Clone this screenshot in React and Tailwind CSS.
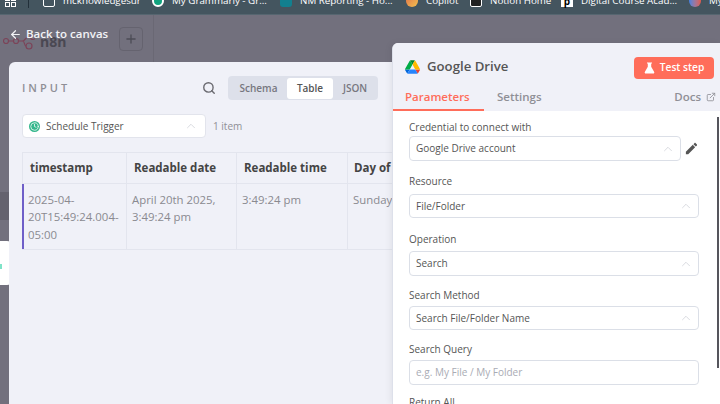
import { ChevronUp, Search, Plus, ArrowLeft, ExternalLink, Clock } from 'lucide-react';

const font = { fontFamily: '"Open Sans", sans-serif' };

function Bookmark({ icon, glyph, label, className }) {
  return (
    <div className={`flex shrink-0 items-center gap-[8px] ${className}`}>
      <span className={`flex h-[12px] w-[12px] shrink-0 items-center justify-center text-[10px] font-bold leading-none text-black ${icon}`}>{glyph}</span>
      <span className="whitespace-nowrap text-[9.8px] leading-[14px] text-white">{label}</span>
    </div>
  );
}

function SelectBox({ value, className = '' }) {
  return (
    <div className={`flex items-center justify-between rounded-[4px] border border-[#dbdfe7] bg-white pl-[6px] pr-[5px] text-[10px] text-[#555] ${className}`}>
      <span>{value}</span>
      <ChevronUp size={14} strokeWidth={1.1} className="shrink-0 text-[#c4c7cf]" />
    </div>
  );
}

function Label({ className, children }) {
  return <div className={`h-[14px] text-[10px] leading-[14px] text-[#555] ${className}`}>{children}</div>;
}

function HeadCell({ className, children }) {
  return <div className={`flex shrink-0 items-center border-r border-[#e3e5ee] text-[11.5px] font-bold text-[#444] ${className}`}>{children}</div>;
}

function BodyCell({ className, children }) {
  return <div className={`shrink-0 border-r border-[#e3e5ee] pt-[7px] text-[11.4px] leading-[17.4px] text-[#8a8a90] ${className}`}>{children}</div>;
}

export default function App() {
  return (
    <div style={font} className="relative flex h-[404px] w-[720px] flex-col overflow-hidden bg-[#72707d]">
      <div className="h-[15px] shrink-0 overflow-hidden border-b border-[#566670] bg-[#44555f]">
        <div className="-mt-[6px] flex h-[14px] items-center pl-[5px]">
          <span className="mr-[12px] grid h-[12px] w-[11px] shrink-0 grid-cols-2 gap-[1px]">
            <i className="border border-white" /><i className="border border-white" />
            <i className="border border-white" /><i className="border border-white" />
          </span>
          <span className="mr-[14px] h-[14px] w-px shrink-0 bg-[#22303a]" />
          <Bookmark icon="rounded-[2px] border border-white" label="mcknowledgesur" className="w-[109px]" />
          <Bookmark icon="rounded-full border-2 border-white bg-[#12a37f]" label="My Grammarly - Gr..." className="w-[128px]" />
          <Bookmark icon="rounded-[3px] bg-[#12808f]" label="NM Reporting - Ho..." className="w-[126px]" />
          <Bookmark icon="rounded-full bg-linear-to-br from-[#e0704a] to-[#f2c14e]" label="Copilot" className="w-[64px]" />
          <Bookmark icon="rounded-[2px] border border-white bg-[#222]" label="Notion Home" className="w-[91px]" />
          <Bookmark icon="bg-white" glyph="p" label="Digital Course Acad..." className="w-[128px]" />
          <Bookmark icon="rounded-full bg-linear-to-r from-[#3f7fe0] to-[#e0574a]" label="My" className="w-[40px]" />
        </div>
      </div>

      <div className="relative flex-1">
        <div className="flex h-[47px] items-center pl-[119px]">
          <span className="flex h-[24px] w-[24px] items-center justify-center rounded-[4px] border border-[#65636f] text-[#4c4b55]">
            <Plus size={14} strokeWidth={2.2} />
          </span>
        </div>
        <span className="absolute left-[153px] top-0 h-[47px] w-px bg-[#6a6874]" />

        <span className="absolute left-[40px] top-[19px] text-[14px] font-bold leading-[16px] text-[#4a4852]">n8n</span>
        <svg className="absolute left-[3px] top-[20px]" width="32" height="17" viewBox="0 0 32 17" fill="none" stroke="#7c4358" strokeWidth="1.2">
          <circle cx="3" cy="6" r="2.5" />
          <circle cx="13" cy="6" r="2.5" />
          <circle cx="26" cy="11" r="3" />
          <circle cx="30" cy="2" r="2.5" />
          <path d="M5.5 6h5M15.5 6h4c3 0 2-4 6.5-4M19.5 6c2.500 0 1.500 5 3.500 5" />
        </svg>
        <div className="absolute left-[9px] top-[11px] flex h-[16px] items-center text-[11.5px] font-semibold text-[#f3f3f6]">
          <ArrowLeft size={13} strokeWidth={2.2} />
          <span className="ml-[4px]">Back to canvas</span>
        </div>

        <span className="absolute left-0 top-[177px] h-[28px] w-[9px] bg-[#64626e]" />
        <span className="absolute left-0 top-[226px] h-[44px] w-[11px] rounded-r-[4px] bg-white" />
        <span className="absolute left-0 top-[249px] h-[5px] w-[2px] bg-[#7fe3c8]" />

        <div className="absolute left-[9px] top-[47px] h-[342px] w-[392px] rounded-tl-[6px] bg-[#f0f1f8] pl-[13px] pt-[14px]">
          <div className="flex h-[24px] w-[356px] items-center">
            <span className="text-[11px] font-semibold tracking-[3px] text-[#8f8f96]">INPUT</span>
            <Search size={14} strokeWidth={2.4} className="ml-auto shrink-0 text-[#6a6a70]" />
            <div className="ml-[12px] flex h-[24px] w-[150px] shrink-0 items-center rounded-[4px] bg-[#dde0ea] pl-[2px] text-[10px] font-semibold text-[#77777f]">
              <span className="w-[57px] text-center">Schema</span>
              <span className="flex h-[21px] w-[46px] items-center justify-center rounded-[3px] bg-white text-[#555]">Table</span>
              <span className="w-[44px] text-center">JSON</span>
            </div>
          </div>

          <div className="mt-[14px] flex h-[24px] items-center">
            <div className="flex h-[24px] w-[184px] items-center rounded-[4px] border border-[#e2e4ec] bg-white pl-[6px] pr-[7px] text-[10px] text-[#555]">
              <span className="mr-[6px] flex h-[11px] w-[11px] shrink-0 items-center justify-center rounded-full bg-[#35b78c] text-white">
                <Clock size={9} strokeWidth={2} />
              </span>
              <span className="flex-1">Schedule Trigger</span>
              <ChevronUp size={14} strokeWidth={1.1} className="shrink-0 text-[#c4c7cf]" />
            </div>
            <span className="ml-[7px] text-[10px] text-[#8f8f96]">1 item</span>
          </div>

          <div className="mt-[14px] w-[380px] overflow-hidden border-y border-[#e3e5ee]">
            <div className="flex h-[31px] border-b border-[#e3e5ee]">
              <HeadCell className="w-[105px] border-l pl-[7px]">timestamp</HeadCell>
              <HeadCell className="w-[110px] pl-[7px]">Readable date</HeadCell>
              <HeadCell className="w-[111px] pl-[7px]">Readable time</HeadCell>
              <HeadCell className="w-[60px] whitespace-nowrap pl-[6px]">Day of week</HeadCell>
            </div>
            <div className="flex h-[65px]">
              <BodyCell className="w-[105px] border-l-2 border-l-[#6f5fc8] pl-[4px] pr-[2px]">2025-04-20T15:49:24.004-05:00</BodyCell>
              <BodyCell className="w-[110px] px-[5px]">April 20th 2025, 3:49:24 pm</BodyCell>
              <BodyCell className="w-[111px] px-[5px]">3:49:24 pm</BodyCell>
              <BodyCell className="w-[60px] px-[5px]">Sunday</BodyCell>
            </div>
          </div>
        </div>

        <div className="absolute left-[392px] top-[28px] h-[361px] w-[328px] overflow-hidden rounded-tl-[6px] border-l border-[#dde0ea] bg-white shadow-[-2px_0_6px_rgba(0,0,0,0.06)]">
          <div className="h-[68px] bg-[#f0f1f8]">
            <div className="flex h-[47px] items-center pl-[12px] pr-[6px]">
              <svg width="15" height="14" viewBox="0 0 87.3 78">
                <path d="m6.6 66.85 3.85 6.65c.8 1.4 1.95 2.5 3.3 3.3l13.75-23.8h-27.5c0 1.55.4 3.1 1.2 4.5z" fill="#0066da" />
                <path d="m43.65 25-13.75-23.8c-1.35.8-2.5 1.9-3.3 3.3l-25.4 44a9.06 9.06 0 0 0 -1.2 4.5h27.5z" fill="#00ac47" />
                <path d="m73.55 76.8c1.35-.8 2.5-1.9 3.3-3.3l1.6-2.75 7.65-13.25c.8-1.4 1.2-2.95 1.2-4.5h-27.5l5.85 11.5z" fill="#ea4335" />
                <path d="m43.65 25 13.75-23.8c-1.35-.8-2.9-1.2-4.5-1.2h-18.5c-1.6 0-3.15.45-4.5 1.2z" fill="#00832d" />
                <path d="m59.8 53h-32.3l-13.75 23.8c1.35.8 2.9 1.2 4.5 1.2h50.8c1.6 0 3.15-.45 4.5-1.2z" fill="#2684fc" />
                <path d="m73.4 26.5-12.7-22c-.8-1.4-1.95-2.5-3.3-3.3l-13.75 23.8 16.15 28h27.45c0-1.55-.4-3.1-1.2-4.5z" fill="#ffba00" />
              </svg>
              <span className="ml-[7px] pt-[1px] text-[13.2px] font-semibold text-[#555]">Google Drive</span>
              <button className="ml-auto mt-[2px] flex h-[22px] w-[80px] items-center justify-center gap-[5px] rounded-[4px] bg-[#ff6d5a] text-[10.2px] font-semibold text-white">
                <svg width="11" height="12" viewBox="0 0 11 12" fill="currentColor">
                  <path d="M3 0.500h5v1h-0.800v3.300l3 5.200c0.400 0.800-0.100 1.500-0.900 1.500h-7.600c-0.800 0-1.300-0.700-0.900-1.500l3-5.200v-3.300h-0.800z" />
                </svg>
                Test step
              </button>
            </div>
            <div className="flex h-[21px] items-start text-[11.5px] font-semibold text-[#8f8f96]">
              <span className="h-[21px] w-[91px] border-b-2 border-[#ff6d5a] pl-[12px] leading-[14px] text-[#ff6d5a]">Parameters</span>
              <span className="ml-[13px] leading-[14px]">Settings</span>
              <span className="ml-auto flex items-center gap-[5px] pr-[4px] leading-[14px]">
                Docs
                <ExternalLink size={10} strokeWidth={2} />
              </span>
            </div>
          </div>

          <div className="relative pl-[16px] pr-[21px] pt-[9px]">
            <span className="absolute right-[1px] top-[6px] h-[251px] w-[2px] bg-[#55555c]" />
            <Label className="mb-[2px]">Credential to connect with</Label>
            <div className="flex items-center">
              <SelectBox value="Google Drive account" className="h-[25px] w-[273px]" />
              <svg width="15" height="15" viewBox="0 0 24 24" fill="#555" className="ml-[3px] shrink-0">
                <path d="M3 17.250V21h3.750L17.810 9.940l-3.750-3.750L3 17.250zM20.710 7.040c.390-.390.390-1.020 0-1.410l-2.340-2.340c-.390-.390-1.020-.390-1.410 0l-1.830 1.830 3.750 3.750 1.830-1.830z" />
              </svg>
            </div>
            <Label className="mb-[6px] mt-[13px]">Resource</Label>
            <SelectBox value="File/Folder" className="h-[24px]" />
            <Label className="mb-[5px] mt-[14px]">Operation</Label>
            <SelectBox value="Search" className="h-[25px]" />
            <Label className="mb-[4px] mt-[12px]">Search Method</Label>
            <SelectBox value="Search File/Folder Name" className="h-[24px]" />
            <Label className="mb-[4px] mt-[12px]">Search Query</Label>
            <div className="flex h-[25px] items-center rounded-[4px] border border-[#dbdfe7] bg-white pl-[6px] text-[10px] text-[#a9abb4]">e.g. My File / My Folder</div>
            <Label className="mt-[10px]">Return All</Label>
          </div>
        </div>
      </div>
    </div>
  );
}
